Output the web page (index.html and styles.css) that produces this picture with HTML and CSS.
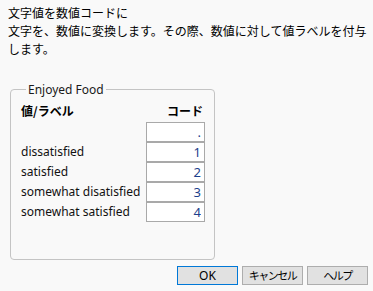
FILE: index.html
```html
<!DOCTYPE html>
<html lang="ja">
<head>
  <meta charset="UTF-8">
  <title>文字値を数値コードに</title>
  <link rel="stylesheet" href="styles.css">
</head>
<body>
  <div class="dialog">
    <div class="intro">
      <p>文字値を数値コードに</p>
      <p>文字を、数値に変換します。その際、数値に対して値ラベルを付与<br>します。</p>
    </div>

    <fieldset class="group">
      <legend>Enjoyed Food</legend>
      <div class="codes">
        <div class="head">値/ラベル</div>
        <div class="head right">コード</div>

        <div class="label"></div>
        <input class="code" type="text" value=".">

        <div class="label">dissatisfied</div>
        <input class="code" type="text" value="1">

        <div class="label">satisfied</div>
        <input class="code" type="text" value="2">

        <div class="label">somewhat disatisfied</div>
        <input class="code" type="text" value="3">

        <div class="label">somewhat satisfied</div>
        <input class="code" type="text" value="4">
      </div>
    </fieldset>

    <!-- ボタン -->
    <div class="buttons">
      <button type="button" class="ok">OK</button>
      <button type="button" class="jp">キャンセル</button>
      <button type="button" class="jp">ヘルプ</button>
    </div>
  </div>
</body>
</html>
```

FILE: styles.css
```css
body {
  margin: 0;
  background: #f9f9f9;
  font-family: "Noto Sans", "Noto Sans CJK JP", sans-serif;
  font-size: 12px;
  color: #000;
}

.dialog {
  width: 373px;
  height: 291px;
}

/* 説明文 */
.intro {
  padding: 4px 0 0 8px;
}

.intro p {
  margin: 0;
  line-height: 18px;
  white-space: nowrap;
  font-family: "Noto Sans CJK JP", sans-serif;
}

/* グループ枠 */
.group {
  margin: 23px 0 0 10px;
  width: 205px;
  height: 179px;
  box-sizing: border-box;
  border: 1px solid #c4c4c4;
  border-radius: 4px;
  padding: 5px 9px 0 10px;
}

.group legend {
  padding: 0 2px;
  margin-left: 5px;
  color: #1a1a1a;
}

.codes {
  display: grid;
  grid-template-columns: 1fr 59px;
  grid-template-rows: 19px;
  grid-auto-rows: 20px;
}

.head {
  font-weight: bold;
  font-family: "Noto Sans CJK JP", sans-serif;
  line-height: 16px;
}

.head.right {
  text-align: right;
  padding-right: 2px;
}

.label {
  line-height: 20px;
  white-space: nowrap;
  color: #111;
}

.code {
  box-sizing: border-box;
  width: 59px;
  height: 20px;
  margin: 0;
  border: 1px solid #a9a9a9;
  background: #fff;
  text-align: right;
  padding: 0 3px;
  font-family: "Noto Sans", sans-serif;
  font-size: 13px;
  color: #1c3f8c;
  outline: none;
}

/* ボタン */
.buttons {
  display: flex;
  justify-content: flex-end;
  gap: 4px;
  padding: 6px 5px 0 0;
}

.buttons button {
  box-sizing: border-box;
  width: 61px;
  height: 19px;
  padding: 0;
  background: #e1e1e1;
  border: 1px solid #adadad;
  font-family: "Noto Sans", "Noto Sans CJK JP", sans-serif;
  font-size: 12px;
  line-height: 17px;
  color: #000;
  white-space: nowrap;
}

.buttons button.jp {
  font-size: 11px;
  letter-spacing: -1.5px;
}

.buttons button.ok {
  border-color: #0078d7;
}
```
